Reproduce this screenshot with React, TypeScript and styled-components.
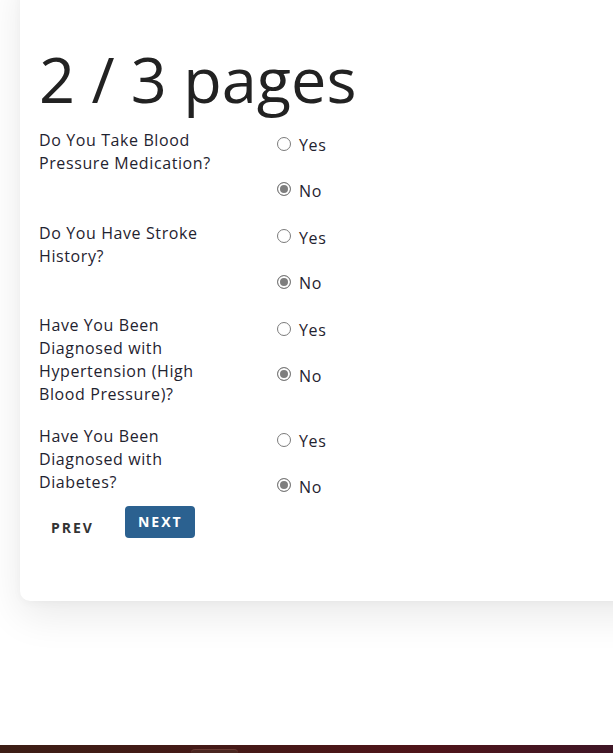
import React, { useState } from "react";
import styled, { createGlobalStyle } from "styled-components";

const GlobalStyle = createGlobalStyle`
  html, body {
    margin: 0;
    padding: 0;
    background: #ffffff;
    overflow: hidden;
  }
  body {
    font-family: "Open Sans", "Liberation Sans", sans-serif;
    color: #212121;
  }
  * { box-sizing: border-box; }
`;

const Page = styled.div`
  display: flex;
  flex-direction: column;
  width: 100%;
  min-height: 753px;
`;

const Main = styled.main`
  display: flow-root;
  flex: none;
  padding: 0 0 0 20px;
  height: 745px;
`;

const Card = styled.section`
  margin-top: -30px;
  width: 680px;
  background: #ffffff;
  border-radius: 10px;
  padding: 70px 20px 57px 19px;
  box-shadow: 0 14px 40px rgba(0, 0, 0, 0.09), 0 2px 8px rgba(0, 0, 0, 0.03);
`;

const Heading = styled.h1`
  margin: 0 0 12px;
  font-size: 63px;
  line-height: 77px;
  font-weight: 400;
  color: #222222;
  letter-spacing: 0;
`;

const Row = styled.div`
  display: grid;
  grid-template-columns: 190px 1fr;
  column-gap: 48px;
  align-items: start;
  margin-bottom: 19px;
`;

const Question = styled.p`
  margin: 0;
  font-size: 16px;
  line-height: 23px;
  letter-spacing: 0.6px;
  color: #1f2330;
`;

const Options = styled.div`
  display: flex;
  flex-direction: column;
  gap: 21.5px;
  padding-top: 4px;
`;

const OptionLabel = styled.label`
  display: flex;
  align-items: center;
  gap: 8px;
  height: 24px;
  font-size: 16px;
  line-height: 24px;
  letter-spacing: 0.6px;
  color: #1f2330;
  cursor: pointer;
`;

const Radio = styled.input`
  appearance: none;
  -webkit-appearance: none;
  width: 14px;
  height: 14px;
  margin: -3px 0 0 0;
  border: 1px solid #7b7b7b;
  border-radius: 50%;
  background: #ffffff;
  flex-shrink: 0;
  &:checked {
    background: #7e7e7e;
    box-shadow: inset 0 0 0 2px #ffffff;
  }
`;

const Actions = styled.div`
  display: flex;
  align-items: flex-start;
  gap: 19px;
  margin-top: -12px;
  padding-left: 0;
`;

const PrevButton = styled.button`
  margin-top: 6px;
  height: 32px;
  padding: 0 12px;
  border: none;
  background: transparent;
  font-family: inherit;
  font-size: 14px;
  font-weight: 700;
  letter-spacing: 2px;
  color: #333333;
  cursor: pointer;
`;

const NextButton = styled.button`
  height: 32px;
  padding: 0 12px 0 13px;
  border: none;
  border-radius: 4px;
  background: #2b6190;
  font-family: inherit;
  font-size: 14px;
  font-weight: 700;
  letter-spacing: 2px;
  color: #ffffff;
  cursor: pointer;
`;

const Footer = styled.footer`
  height: 8px;
  overflow: hidden;
  background: linear-gradient(90deg, #3d1e15 0%, #471817 45%, #4f1419 70%, #3f1626 100%);
  padding-left: 191px;
  padding-top: 4px;
`;

const FooterTab = styled.div`
  width: 47px;
  height: 20px;
  border-radius: 4px 4px 0 0;
  border-top: 1px solid #6a3a33;
  background: #4a2620;
`;

const questions = [
  { id: "bpmed", text: "Do You Take Blood Pressure Medication?" },
  { id: "stroke", text: "Do You Have Stroke History?" },
  { id: "hyper", text: "Have You Been Diagnosed with Hypertension (High Blood Pressure)?" },
  { id: "diabetes", text: "Have You Been Diagnosed with Diabetes?" },
];

export default function App() {
  const [answers, setAnswers] = useState<Record<string, string>>({
    bpmed: "no",
    stroke: "no",
    hyper: "no",
    diabetes: "no",
  });

  return (
    <Page>
      <GlobalStyle />
      <Main>
        <Card>
          <Heading>2 / 3 pages</Heading>
          {questions.map((q) => (
            <Row key={q.id}>
              <Question>{q.text}</Question>
              <Options>
                {["yes", "no"].map((v) => (
                  <OptionLabel key={v}>
                    <Radio
                      type="radio"
                      name={q.id}
                      value={v}
                      checked={answers[q.id] === v}
                      onChange={() => setAnswers({ ...answers, [q.id]: v })}
                    />
                    {v === "yes" ? "Yes" : "No"}
                  </OptionLabel>
                ))}
              </Options>
            </Row>
          ))}
          <Actions>
            <PrevButton type="button">PREV</PrevButton>
            <NextButton type="button">NEXT</NextButton>
          </Actions>
        </Card>
      </Main>
      <Footer>
        <FooterTab />
      </Footer>
    </Page>
  );
}
